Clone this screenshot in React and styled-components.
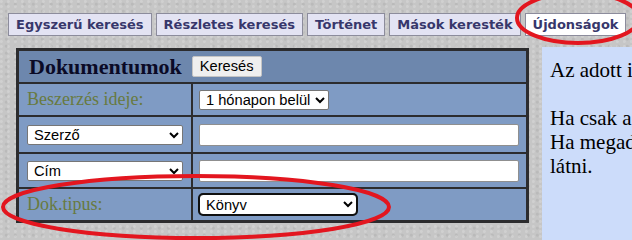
import React from "react";
import styled, { createGlobalStyle } from "styled-components";

const Global = createGlobalStyle`
  html, body { margin: 0; padding: 0; overflow: hidden; background: #c6c6c6; }
  #root { width: 632px; height: 240px; }
`;

const Page = styled.div`
  position: relative;
  width: 632px;
  height: 240px;
  overflow: hidden;
  background-color: #c6c6c6;
  background-image:
    radial-gradient(circle at 20% 30%, rgba(255,255,255,0.18) 0 1px, transparent 2px),
    radial-gradient(circle at 70% 60%, rgba(0,0,0,0.06) 0 1px, transparent 2px);
  background-size: 7px 5px, 9px 7px;
`;

const TabBar = styled.div`
  display: flex;
  gap: 4px;
  padding: 13px 0 0 8px;
  height: 23px;
`;

const Tab = styled.div`
  box-sizing: border-box;
  height: 23px;
  padding: 0 7px;
  border: 1px solid #8c8c9c;
  background: ${(p) => (p.$active ? "#ffffff" : "#e3e3f3")};
  color: #37376b;
  font-family: "DejaVu Sans", Verdana, sans-serif;
  font-weight: bold;
  font-size: 13px;
  line-height: 21px;
  white-space: nowrap;
  flex-shrink: 0;
`;

const Body = styled.div`
  display: flex;
  align-items: flex-start;
  gap: 13px;
  padding: 12px 0 0 16px;
`;

const FormTable = styled.div`
  box-sizing: border-box;
  width: 513px;
  flex-shrink: 0;
  display: grid;
  grid-template-columns: 172px 1fr;
  grid-template-rows: 31px 31px 35px 33px 31px;
  gap: 2px;
  padding: 3px;
  background: #2c2c2e;
`;

const HeaderCell = styled.div`
  grid-column: 1 / span 2;
  display: flex;
  align-items: center;
  gap: 10px;
  padding-left: 10px;
  background: #6d87ad;
`;

const Title = styled.span`
  font-family: "Liberation Serif", "Times New Roman", serif;
  font-weight: bold;
  font-size: 22px;
  color: #0a0a26;
`;

const Button = styled.button`
  font-family: "Liberation Sans", Arial, sans-serif;
  font-size: 14.67px;
  height: 21px;
  padding: 0 7px;
  color: #000;
  background: #efefef;
  border: 1px solid #c4c4c4;
  border-radius: 2px;
  line-height: 19px;
`;

const Cell = styled.div`
  display: flex;
  align-items: center;
  padding: 0 ${(p) => (p.$right ? "7px 0 6px" : "8px")};
  background: #7f9bc4;
`;

const Label = styled.span`
  font-family: "Liberation Serif", "Times New Roman", serif;
  font-size: 18px;
  color: #687a40;
`;

const Select = styled.select`
  box-sizing: border-box;
  font-family: "Liberation Sans", Arial, sans-serif;
  font-size: 14.67px;
  height: 20px;
  width: ${(p) => p.$w}px;
  padding: 0 2px;
  color: #000;
  background: #fff;
  border: 1px solid #767676;
  border-radius: 2px;
  ${(p) =>
    p.$focused &&
    `outline: 2px solid #101010; outline-offset: -1px; border-radius: 4px; height: 21px;`}
`;

const TextInput = styled.input`
  box-sizing: border-box;
  width: 320px;
  height: 22px;
  font-family: "Liberation Sans", Arial, sans-serif;
  font-size: 14.67px;
  background: #fff;
  border: 1px solid #8f8f8f;
  border-radius: 2px;
`;

const InfoPanel = styled.div`
  box-sizing: border-box;
  width: 420px;
  min-height: 200px;
  flex-shrink: 0;
  margin-top: -1px;
  padding: 11px 8px;
  background: #ccdcfa;
  font-family: "Liberation Serif", "Times New Roman", serif;
  font-size: 21px;
  line-height: 24px;
  color: #000;
  white-space: nowrap;
`;

const Annotations = styled.svg`
  position: absolute;
  left: 0;
  top: 0;
  pointer-events: none;
`;

const tabs = ["Egyszerű keresés", "Részletes keresés", "Történet", "Mások keresték", "Újdonságok"];

export default function App() {
  return (
    <>
      <Global />
      <Page>
        <TabBar>
          {tabs.map((t, i) => (
            <Tab key={t} $active={i === tabs.length - 1}>
              {t}
            </Tab>
          ))}
        </TabBar>
        <Body>
          <FormTable>
            <HeaderCell>
              <Title>Dokumentumok</Title>
              <Button>Keresés</Button>
            </HeaderCell>
            <Cell>
              <Label>Beszerzés ideje:</Label>
            </Cell>
            <Cell $right>
              <Select $w={130} defaultValue="1">
                <option value="1">1 hónapon belül</option>
                <option value="3">3 hónapon belül</option>
              </Select>
            </Cell>
            <Cell>
              <Select $w={157} defaultValue="szerzo">
                <option value="szerzo">Szerző</option>
              </Select>
            </Cell>
            <Cell $right>
              <TextInput />
            </Cell>
            <Cell>
              <Select $w={157} defaultValue="cim">
                <option value="cim">Cím</option>
              </Select>
            </Cell>
            <Cell $right>
              <TextInput />
            </Cell>
            <Cell>
              <Label>Dok.tipus:</Label>
            </Cell>
            <Cell $right>
              <Select $w={158} $focused defaultValue="konyv">
                <option value="konyv">Könyv</option>
              </Select>
            </Cell>
          </FormTable>
          <InfoPanel>
            Az adott időszakban beszerzett dokumentumok listája.
            <br />
            <br />
            Ha csak a beszerzés idejét adja meg, minden újdonságot lát.
            <br />
            Ha megadja a szerzőt vagy a címet is, csak azokat fogja
            <br />
            látni.
          </InfoPanel>
        </Body>
        <Annotations width="632" height="240" viewBox="0 0 632 240">
          <ellipse cx="578" cy="18" rx="61" ry="25" fill="none" stroke="#e3161f" strokeWidth="4" />
          <ellipse cx="196" cy="207" rx="193" ry="31" fill="none" stroke="#e3161f" strokeWidth="4" />
        </Annotations>
      </Page>
    </>
  );
}
